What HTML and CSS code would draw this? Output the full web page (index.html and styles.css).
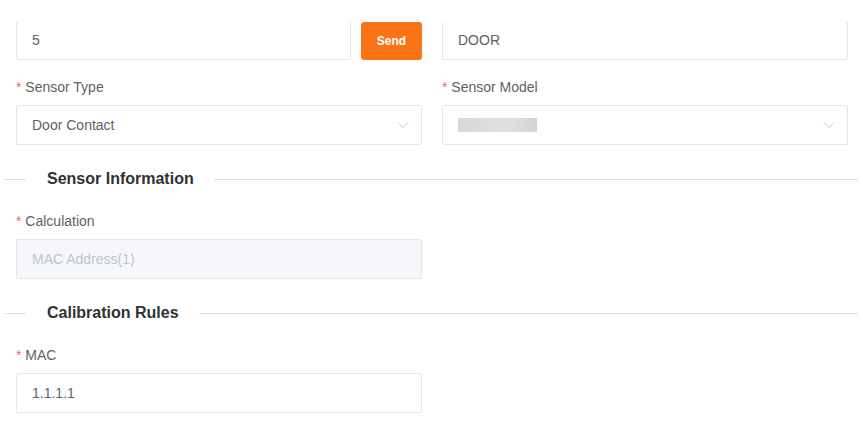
FILE: index.html
```html
<!DOCTYPE html>
<html>

	<head>
		<meta charset="UTF-8">
		<title>Sensor</title>
		<link rel="stylesheet" href="styles.css">
	</head>

	<body>
		<!--滚动区域，顶部被裁切-->
		<div class="scroll">
			<div class="form">
				<div class="row">
					<div class="col">
						<div class="send-line">
							<div class="input">5</div>
							<a href="#" class="btn-send">Send</a>
						</div>
					</div>
					<div class="col">
						<div class="input">DOOR</div>
					</div>
				</div>

				<div class="row">
					<div class="col item">
						<div class="label"><span class="req">*</span> Sensor Type</div>
						<div class="input select">
							<span>Door Contact</span>
							<svg class="arrow" width="12" height="8" viewBox="0 0 12 8"><path d="M1 1.5 L6 6.5 L11 1.5" fill="none" stroke="#c0c4cc" stroke-width="1"/></svg>
						</div>
					</div>
					<div class="col item">
						<div class="label"><span class="req">*</span> Sensor Model</div>
						<div class="input select">
							<span class="blur"></span>
							<svg class="arrow" width="12" height="8" viewBox="0 0 12 8"><path d="M1 1.5 L6 6.5 L11 1.5" fill="none" stroke="#c0c4cc" stroke-width="1"/></svg>
						</div>
					</div>
				</div>

				<div class="divider"><span class="line-l"></span><span class="title">Sensor Information</span><span class="line-r"></span></div>

				<div class="row">
					<div class="col item">
						<div class="label"><span class="req">*</span> Calculation</div>
						<div class="input disabled">MAC Address(1)</div>
					</div>
				</div>

				<div class="divider"><span class="line-l"></span><span class="title">Calibration Rules</span><span class="line-r"></span></div>

				<div class="row">
					<div class="col item">
						<div class="label"><span class="req">*</span> MAC</div>
						<div class="input">1.1.1.1</div>
					</div>
				</div>
			</div>
		</div>
	</body>

</html>
```

FILE: styles.css
```css
* {
	margin: 0;
	padding: 0;
	box-sizing: border-box;
}

body {
	background: #fff;
	font-family: "Liberation Sans", Arial, sans-serif;
	font-size: 14px;
	color: #606266;
}

.scroll {
	margin-top: 22px;
	height: 407px;
	overflow: hidden;
}

.form {
	margin-top: -2px;
	width: 832px;
	margin-left: 16px;
}

.row {
	display: flex;
	gap: 20px;
}

.col {
	width: 406px;
}

.item {
	margin-top: 16px;
}

.send-line {
	display: flex;
	gap: 10px;
}

.send-line .input {
	flex: 1;
}

.btn-send {
	width: 61px;
	height: 38px;
	margin-top: 2px;
	background: #fa7417;
	border-radius: 3px;
	color: #fff;
	font-size: 12px;
	font-weight: bold;
	text-decoration: none;
	display: flex;
	align-items: center;
	justify-content: center;
}

.label {
	line-height: 22px;
	margin-bottom: 7px;
	color: #606266;
}

.req {
	color: #f56c6c;
}

.input {
	height: 40px;
	border: 1px solid #e4e7ed;
	border-radius: 2px;
	padding: 0 15px;
	display: flex;
	align-items: center;
	color: #606266;
}

.select {
	justify-content: space-between;
}

.arrow {
	margin-right: -3px;
}

.blur {
	width: 79px;
	height: 14px;
	background: linear-gradient(90deg, #d8d8d8, #e0e0e0 60%, #d4d4d4);
}

.disabled {
	background: #f5f7fa;
	color: #c0c4cc;
}

.divider {
	display: flex;
	align-items: center;
	margin: 22px -10px 3px -11px;
	height: 24px;
}

.line-l {
	width: 21px;
	border-top: 1px solid #dcdfe6;
}

.line-r {
	flex: 1;
	border-top: 1px solid #dcdfe6;
}

.title {
	padding: 0 20px 0 21px;
	font-size: 16px;
	font-weight: bold;
	color: #303133;
}
```
